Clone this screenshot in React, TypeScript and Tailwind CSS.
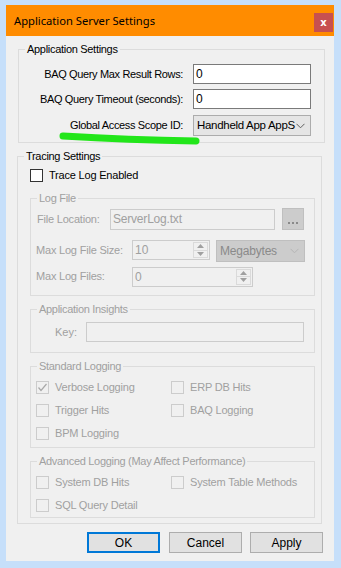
import React from "react";

const F = { fontFamily: '"Liberation Sans", Arial, sans-serif' };

function Group({
  label,
  disabled,
  className,
  children,
}: {
  label: string;
  disabled?: boolean;
  className: string;
  children?: React.ReactNode;
}) {
  return (
    <div className={`relative border border-[#dcdcdc] ${className}`}>
      <div
        className={`absolute left-[6px] top-[-7px] px-[2px] bg-[#f0f0f0] text-[11px] tracking-[-0.3px] leading-[13px] whitespace-nowrap ${
          disabled ? "text-[#a0a0a0]" : "text-black"
        }`}
      >
        {label}
      </div>
      {children}
    </div>
  );
}

function Check({ checked, disabled }: { checked?: boolean; disabled?: boolean }) {
  return (
    <div
      className={`w-[13px] h-[13px] border flex items-center justify-center shrink-0 ${
        disabled ? "border-[#cccccc] bg-[#f0f0f0]" : "border-[#333333] bg-white"
      }`}
    >
      {checked && (
        <svg width="11" height="11" viewBox="0 0 11 11">
          <polyline points="1.5,5.5 4,8.5 9.5,2" fill="none" stroke="#a8a8a8" strokeWidth="1.2" />
        </svg>
      )}
    </div>
  );
}

function CheckRow({ label, checked }: { label: string; checked?: boolean }) {
  return (
    <div className="flex items-center h-[13px]">
      <Check checked={checked} disabled />
      <span className="ml-[6px] text-[11px] tracking-[-0.2px] text-[#a0a0a0] whitespace-nowrap">{label}</span>
    </div>
  );
}

function Chevron({ color }: { color: string }) {
  return (
    <svg width="9" height="6" viewBox="0 0 9 6">
      <polyline points="0.5,0.8 4.5,4.8 8.5,0.8" fill="none" stroke={color} strokeWidth="1" />
    </svg>
  );
}

function Spinner({ value, width }: { value: string; width: string }) {
  return (
    <div className={`flex items-stretch border border-[#cccccc] bg-[#f0f0f0] ${width} h-[20px]`}>
      <span className="flex-1 pl-[2px] text-[12px] leading-[18px] text-[#a0a0a0]">{value}</span>
      <div className="w-[15px] my-[1px] mr-[1px] flex flex-col border border-[#dadada]">
        <div className="flex-1 flex items-center justify-center border-b border-[#dadada]">
          <svg width="7" height="4" viewBox="0 0 7 4">
            <polygon points="3.5,0 7,4 0,4" fill="#a0a0a0" />
          </svg>
        </div>
        <div className="flex-1 flex items-center justify-center">
          <svg width="7" height="4" viewBox="0 0 7 4">
            <polygon points="0,0 7,0 3.5,4" fill="#a0a0a0" />
          </svg>
        </div>
      </div>
    </div>
  );
}

export default function App() {
  return (
    <div className="w-[341px] h-[568px] bg-[#c6dffa] pt-[5px] pl-[6px]" style={F}>
      <div className="w-[328px] h-[556px] bg-[#f0f0f0] flex flex-col">
        {/* Title bar */}
        <div className="h-[31px] bg-[#ff8c00] flex items-start shrink-0">
          <span
            className="mt-[7px] ml-[8px] text-[11.2px] leading-[17px] text-black"
            style={{ fontFamily: '"Noto Sans", "Open Sans", sans-serif' }}
          >
            Application Server Settings
          </span>
          <div className="ml-auto mr-[1px] mt-[8px] w-[19px] h-[19px] bg-[#c75050] flex items-center justify-center">
            <span className="text-white text-[10px] font-bold leading-none" style={{ fontFamily: '"DejaVu Sans", sans-serif' }}>
              x
            </span>
          </div>
        </div>

        {/* Body */}
        <div className="relative flex flex-col">
          {/* Application Settings */}
          <Group label="Application Settings" className="ml-[12px] mt-[13px] w-[307px] h-[94px]">
            <div className="flex flex-col pt-[14px]">
              <div className="flex items-center h-[20px]">
                <span className="w-[164px] text-right text-[11px] tracking-[-0.35px] text-black whitespace-nowrap">BAQ Query Max Result Rows:</span>
                <div className="ml-[10px] w-[118px] h-[20px] border border-[#7a7a7a] bg-white text-[12px] leading-[18px] pl-[2px] text-black">
                  0
                </div>
              </div>
              <div className="flex items-center h-[20px] mt-[5px]">
                <span className="w-[164px] text-right text-[11px] tracking-[-0.35px] text-black whitespace-nowrap">BAQ Query Timeout (seconds):</span>
                <div className="ml-[10px] w-[118px] h-[20px] border border-[#7a7a7a] bg-white text-[12px] leading-[18px] pl-[2px] text-black">
                  0
                </div>
              </div>
              <div className="flex items-center h-[21px] mt-[6px]">
                <span className="w-[164px] text-right text-[11px] tracking-[-0.35px] text-black whitespace-nowrap">Global Access Scope ID:</span>
                <div className="ml-[10px] w-[118px] h-[21px] border border-[#acacac] bg-[#e5e5e5] flex items-center overflow-hidden">
                  <span className="pl-[3px] text-[11.5px] tracking-[-0.3px] text-black whitespace-nowrap w-[98px]">Handheld App AppS</span>
                  <div className="ml-auto mr-[5px] flex items-center">
                    <Chevron color="#606060" />
                  </div>
                </div>
              </div>
            </div>
          </Group>

          {/* Tracing Settings */}
          <Group label="Tracing Settings" className="ml-[11px] mt-[13px] w-[305px] h-[368px]">
            <div className="flex flex-col pl-[12px] pt-[12px]">
              <div className="flex items-center h-[13px]">
                <Check />
                <span className="ml-[6px] text-[11px] tracking-[-0.2px] text-black whitespace-nowrap">Trace Log Enabled</span>
              </div>

              {/* Log File */}
              <Group label="Log File" disabled className="mt-[16px] w-[285px] h-[98px]">
                <div className="flex flex-col pt-[10px]">
                  <div className="flex items-center h-[21px]">
                    <span className="ml-[6px] w-[73px] text-[11px] tracking-[-0.2px] text-[#a0a0a0] whitespace-nowrap">File Location:</span>
                    <div className="w-[165px] h-[21px] border border-[#cccccc] bg-[#f0f0f0] text-[12px] tracking-[-0.2px] leading-[19px] pl-[2px] text-[#a0a0a0]">
                      ServerLog.txt
                    </div>
                    <div className="ml-[7px] w-[22px] h-[22px] -mt-[1px] border border-[#bfbfbf] bg-[#cccccc] flex items-end justify-center pb-[5px]">
                      <svg width="10" height="2" viewBox="0 0 10 2">
                        <rect x="0" y="0" width="2" height="2" fill="#8a8a8a" />
                        <rect x="4" y="0" width="2" height="2" fill="#8a8a8a" />
                        <rect x="8" y="0" width="2" height="2" fill="#8a8a8a" />
                      </svg>
                    </div>
                  </div>
                  <div className="flex items-start h-[21px] mt-[10px]">
                    <span className="ml-[5px] w-[96px] h-[20px] flex items-center text-[11px] tracking-[-0.2px] text-[#a0a0a0] whitespace-nowrap">Max Log File Size:</span>
                    <Spinner value="10" width="w-[78px]" />
                    <div className="ml-[6px] w-[89px] h-[22px] border border-[#bfbfbf] bg-[#cccccc] flex items-center">
                      <span className="pl-[3px] text-[12px] tracking-[-0.2px] text-[#8a8a8a]">Megabytes</span>
                      <div className="ml-auto mr-[5px] flex items-center">
                        <Chevron color="#b5b5b5" />
                      </div>
                    </div>
                  </div>
                  <div className="flex items-center h-[21px] mt-[5px]">
                    <span className="ml-[5px] w-[96px] text-[11px] tracking-[-0.2px] text-[#a0a0a0] whitespace-nowrap">Max Log Files:</span>
                    <Spinner value="0" width="w-[121px]" />
                  </div>
                </div>
              </Group>

              {/* Application Insights */}
              <Group label="Application Insights" disabled className="mt-[13px] w-[285px] h-[44px]">
                <div className="flex items-center pt-[12px]">
                  <span className="w-[46px] text-right text-[11px] text-[#a0a0a0]">Key:</span>
                  <div className="ml-[9px] w-[218px] h-[20px] border border-[#cccccc] bg-[#f0f0f0]" />
                </div>
              </Group>

              {/* Standard Logging */}
              <Group label="Standard Logging" disabled className="mt-[13px] w-[285px] h-[82px]">
                <div className="grid grid-cols-[135px_1fr] gap-y-[10px] pl-[5px] pt-[14px]">
                  <CheckRow label="Verbose Logging" checked />
                  <CheckRow label="ERP DB Hits" />
                  <CheckRow label="Trigger Hits" />
                  <CheckRow label="BAQ Logging" />
                  <CheckRow label="BPM Logging" />
                </div>
              </Group>

              {/* Advanced Logging */}
              <Group label="Advanced Logging (May Affect Performance)" disabled className="mt-[13px] w-[285px] h-[57px]">
                <div className="grid grid-cols-[135px_1fr] gap-y-[10px] pl-[5px] pt-[14px]">
                  <CheckRow label="System DB Hits" />
                  <CheckRow label="System Table Methods" />
                  <CheckRow label="SQL Query Detail" />
                </div>
              </Group>
            </div>
          </Group>

          {/* Buttons */}
          <div className="flex justify-end mt-[8px] mr-[11px] text-[12px] text-black">
            <div className="w-[73px] h-[21px] border-2 border-[#0078d7] bg-[#e1e1e1] flex items-center justify-center">OK</div>
            <div className="ml-[9px] w-[73px] h-[21px] border border-[#adadad] bg-[#e1e1e1] flex items-center justify-center">Cancel</div>
            <div className="ml-[8px] w-[73px] h-[21px] border border-[#adadad] bg-[#e1e1e1] flex items-center justify-center">Apply</div>
          </div>

          {/* Green highlight stroke */}
          <svg className="absolute left-[52px] top-[95px] pointer-events-none" width="145" height="18" viewBox="0 0 145 18">
            <path d="M5 5 Q 70 9 138 10" fill="none" stroke="#22e61a" strokeWidth="7" strokeLinecap="round" />
          </svg>
        </div>
      </div>
    </div>
  );
}
